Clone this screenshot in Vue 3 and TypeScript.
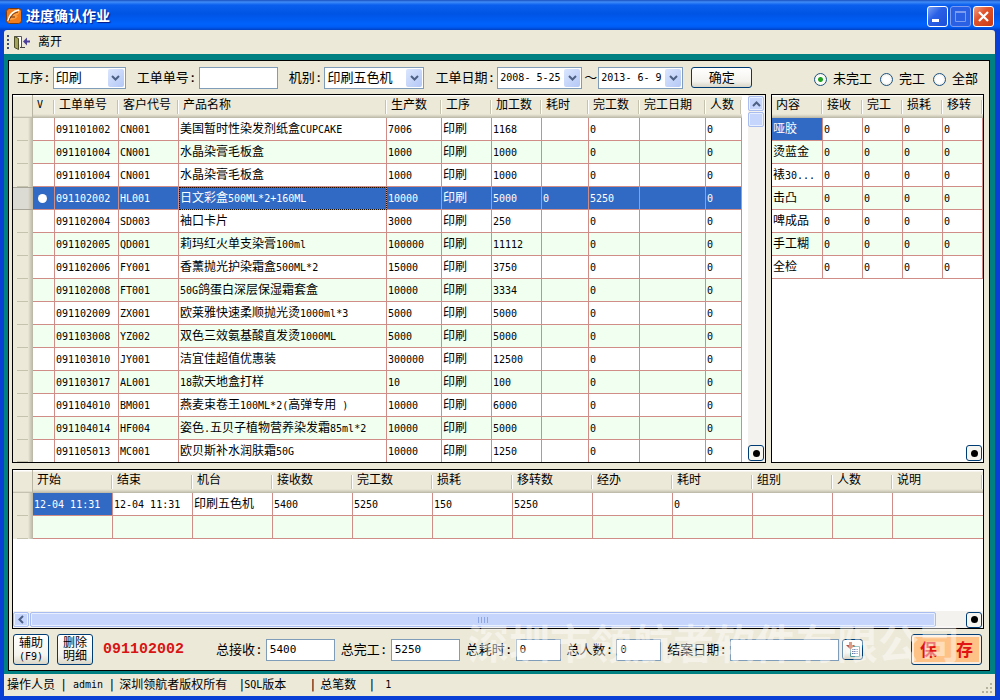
<script setup lang="ts">
import { ref } from 'vue'

interface Run {
  text: string
  latin: boolean
}

interface Column {
  label: string
  width?: number
}

function runs(text: string): Run[] {
  const parts = text.match(/[\x20-\x7e]+|[^\x20-\x7e]+/g) ?? []
  return parts.map((part) => ({ text: part, latin: /^[\x20-\x7e]/.test(part) }))
}

const orderColumns: Column[] = [
  { label: 'V', width: 22 },
  { label: '工单单号', width: 64 },
  { label: '客户代号', width: 60 },
  { label: '产品名称' },
  { label: '生产数', width: 55 },
  { label: '工序', width: 50 },
  { label: '加工数', width: 50 },
  { label: '耗时', width: 47 },
  { label: '完工数', width: 51 },
  { label: '完工日期', width: 66 },
  { label: '人数', width: 36 },
]

const orders: string[][] = [
  ['091101002', 'CN001', '美国暂时性染发剂纸盒CUPCAKE', '7006', '1168', '', '0'],
  ['091101004', 'CN001', '水晶染膏毛板盒', '1000', '1000', '', '0'],
  ['091101004', 'CN001', '水晶染膏毛板盒', '1000', '1000', '', '0'],
  ['091102002', 'HL001', '日文彩盒500ML*2+160ML', '10000', '5000', '0', '5250'],
  ['091102004', 'SD003', '袖口卡片', '3000', '250', '', '0'],
  ['091102005', 'QD001', '莉玛红火单支染膏100ml', '100000', '11112', '', '0'],
  ['091102006', 'FY001', '香薰抛光护染霜盒500ML*2', '15000', '3750', '', '0'],
  ['091102008', 'FT001', '50G鸽蛋白深层保湿霜套盒', '10000', '3334', '', '0'],
  ['091102009', 'ZX001', '欧莱雅快速柔顺抛光烫1000ml*3', '5000', '5000', '', '0'],
  ['091103008', 'YZ002', '双色三效氨基酸直发烫1000ML', '5000', '5000', '', '0'],
  ['091103010', 'JY001', '洁宜佳超值优惠装', '300000', '12500', '', '0'],
  ['091103017', 'AL001', '18款天地盒打样', '10', '100', '', '0'],
  ['091104010', 'BM001', '燕麦束卷王100ML*2(高弹专用 )', '10000', '6000', '', '0'],
  ['091104014', 'HF004', '姿色.五贝子植物营养染发霜85ml*2', '10000', '5000', '', '0'],
  ['091105013', 'MC001', '欧贝斯补水润肤霜50G', '10000', '1250', '', '0'],
].map(([no, customer, product, qty, processed, time, done]) => [
  '', no, customer, product, qty, '印刷', processed, time, done, '', '0',
])

const selectedOrder = ref(3)

const stepColumns: Column[] = [
  { label: '内容' },
  { label: '接收', width: 40 },
  { label: '完工', width: 40 },
  { label: '损耗', width: 40 },
  { label: '移转', width: 40 },
]
const steps = ['哑胶', '烫蓝金', '裱30...', '击凸', '啤成品', '手工糊', '全检'].map((name) => [
  name, '0', '0', '0', '0',
])

const recordColumns: Column[] = [
  { label: '开始', width: 80 },
  { label: '结束', width: 80 },
  { label: '机台', width: 80 },
  { label: '接收数', width: 80 },
  { label: '完工数', width: 80 },
  { label: '损耗', width: 80 },
  { label: '移转数', width: 80 },
  { label: '经办', width: 80 },
  { label: '耗时', width: 80 },
  { label: '组别', width: 80 },
  { label: '人数', width: 60 },
  { label: '说明' },
]
const records: string[][] = [
  ['12-04 11:31', '12-04 11:31', '印刷五色机', '5400', '5250', '150', '5250', '', '0', '', '', ''],
  ['', '', '', '', '', '', '', '', '', '', '', ''],
]

const process = ref('印刷')
const orderNo = ref('')
const machine = ref('印刷五色机')
const dateFrom = ref('2008- 5-25')
const dateTo = ref('2013- 6- 9')
const status = ref('未完工')
const totalReceived = ref('5400')
const totalDone = ref('5250')
const totalTime = ref('0')
const totalPeople = ref('0')
const closeDate = ref('')
</script>

<template>
  <div class="window">
    <header class="titlebar">
      <svg class="app-icon" width="16" height="16" viewBox="0 0 16 16">
        <rect x="0.5" y="0.5" width="15" height="15" rx="3" fill="#f07c1c" stroke="#7a3a10" />
        <path d="M2 13C2 6 6 2 14 2c0 3-2 5-4 6 1 0 2 0 2 0-2 3-5 4-8 4z" fill="#ffa040" />
        <path d="M2 13C3 7 7 3 13 2" fill="none" stroke="#fff" stroke-width="1.4" />
        <path d="M3 13C4 9 7 5 12 4M5 9h4" fill="none" stroke="#6a300c" />
      </svg>
      <h1>进度确认作业</h1>
      <div class="window-buttons">
        <button type="button" aria-label="最小化">
          <svg width="19" height="19" viewBox="0 0 19 19"><path d="M4 12h7v3H4z" fill="#fff" /></svg>
        </button>
        <button type="button" class="dim" aria-label="最大化" disabled>
          <svg width="19" height="19" viewBox="0 0 19 19">
            <path d="M4.500 5h10v9.500h-10z" fill="none" stroke="#7d9cf0" />
            <path d="M4 5h11" stroke="#7d9cf0" stroke-width="2" />
          </svg>
        </button>
        <button type="button" class="close" aria-label="关闭">
          <svg width="19" height="19" viewBox="0 0 19 19">
            <path d="M5 5l9 9M14 5l-9 9" stroke="#fff" stroke-width="2.200" />
          </svg>
        </button>
      </div>
    </header>

    <nav class="toolbar">
      <span class="grip"><i></i><i></i><i></i><i></i></span>
      <button type="button" class="leave">
        <svg width="17" height="15" viewBox="0 0 17 15">
          <path d="M1.500 1.500h7v11" fill="#fff" stroke="#555" />
          <path d="M1.500 1.500l4 2v11l-4-2z" fill="#a3a45c" stroke="#4d4d28" />
          <path d="M7 12.500h5" stroke="#444" />
          <path d="M10 6.500l4-4v3h3v2h-3v3z" fill="#4a3f9a" />
        </svg>
        <span>离开</span>
      </button>
    </nav>

    <div class="desk">
      <main class="panel">
        <form class="filters" @submit.prevent>
          <div class="field">
            <label for="process">工序:</label>
            <span class="combo short">
              <select id="process" v-model="process"><option>印刷</option></select>
              <span class="drop"><svg width="9" height="6" viewBox="0 0 9 6"><path d="M1 1l3.500 3.500L8 1" fill="none" stroke="#4d6185" stroke-width="2" /></svg></span>
            </span>
          </div>
          <div class="field">
            <label for="order-no">工单单号:</label>
            <input id="order-no" v-model="orderNo" class="order-no" type="text" />
          </div>
          <div class="field">
            <label for="machine">机别:</label>
            <span class="combo long">
              <select id="machine" v-model="machine"><option>印刷五色机</option></select>
              <span class="drop"><svg width="9" height="6" viewBox="0 0 9 6"><path d="M1 1l3.500 3.500L8 1" fill="none" stroke="#4d6185" stroke-width="2" /></svg></span>
            </span>
          </div>
          <div class="field">
            <label for="date-from">工单日期:</label>
            <span class="combo date">
              <input id="date-from" v-model="dateFrom" type="text" />
              <span class="drop"><svg width="9" height="6" viewBox="0 0 9 6"><path d="M1 1l3.500 3.500L8 1" fill="none" stroke="#4d6185" stroke-width="2" /></svg></span>
            </span>
            <label for="date-to" class="tilde">～</label>
            <span class="combo date">
              <input id="date-to" v-model="dateTo" type="text" />
              <span class="drop"><svg width="9" height="6" viewBox="0 0 9 6"><path d="M1 1l3.500 3.500L8 1" fill="none" stroke="#4d6185" stroke-width="2" /></svg></span>
            </span>
          </div>
          <button type="submit" class="xp-button confirm">确定</button>
          <div class="radios">
            <label v-for="name in ['未完工', '完工', '全部']" :key="name">
              <input v-model="status" type="radio" name="status" :value="name" />{{ name }}
            </label>
          </div>
        </form>

        <div class="upper">
          <section class="pane orders">
            <div class="table-wrap">
              <table>
                <colgroup>
                  <col class="stub-col" />
                  <col v-for="c in orderColumns" :key="c.label" :style="{ width: c.width ? c.width + 'px' : 'auto' }" />
                </colgroup>
                <thead>
                  <tr>
                    <th class="stub"></th>
                    <th v-for="c in orderColumns" :key="c.label" :class="{ latin: c.label === 'V' }">{{ c.label }}</th>
                  </tr>
                </thead>
                <tbody>
                  <tr
                    v-for="(row, r) in orders"
                    :key="r"
                    :class="{ selected: r === selectedOrder }"
                    @click="selectedOrder = r"
                  >
                    <td class="stub"></td>
                    <td v-for="(cell, c) in row" :key="c" :class="{ focus: r === selectedOrder && c === 3 }">
                      <i v-if="c === 0 && r === selectedOrder" class="dot"></i>
                      <span v-for="(run, i) in runs(cell)" v-else :key="i" :class="{ latin: run.latin }">{{ run.text }}</span>
                    </td>
                  </tr>
                </tbody>
              </table>
            </div>
            <div class="vscroll">
              <button type="button" class="scroll-button" aria-label="向上">
                <svg width="9" height="6" viewBox="0 0 9 6"><path d="M1 5l3.500-3.500L8 5" fill="none" stroke="#4d6185" stroke-width="2" /></svg>
              </button>
              <div class="thumb"></div>
              <button type="button" class="mark" aria-label="记录"><i></i></button>
            </div>
          </section>

          <section class="pane steps">
            <table>
              <colgroup>
                <col v-for="c in stepColumns" :key="c.label" :style="{ width: c.width ? c.width + 'px' : 'auto' }" />
              </colgroup>
              <thead>
                <tr><th v-for="c in stepColumns" :key="c.label">{{ c.label }}</th></tr>
              </thead>
              <tbody>
                <tr v-for="(row, r) in steps" :key="r">
                  <td v-for="(cell, c) in row" :key="c" :class="{ current: r === 0 && c === 0 }">
                    <span v-for="(run, i) in runs(cell)" :key="i" :class="{ latin: run.latin }">{{ run.text }}</span>
                  </td>
                </tr>
              </tbody>
            </table>
            <button type="button" class="mark" aria-label="记录"><i></i></button>
          </section>
        </div>

        <section class="pane records">
          <table>
            <colgroup>
              <col class="stub-col" />
              <col v-for="c in recordColumns" :key="c.label" :style="{ width: c.width ? c.width + 'px' : 'auto' }" />
            </colgroup>
            <thead>
              <tr>
                <th class="stub"></th>
                <th v-for="c in recordColumns" :key="c.label">{{ c.label }}</th>
              </tr>
            </thead>
            <tbody>
              <tr v-for="(row, r) in records" :key="r">
                <td class="stub"></td>
                <td v-for="(cell, c) in row" :key="c" :class="{ current: r === 0 && c === 0 }">
                  <span v-for="(run, i) in runs(cell)" :key="i" :class="{ latin: run.latin }">{{ run.text }}</span>
                </td>
              </tr>
            </tbody>
          </table>
          <div class="hscroll">
            <button type="button" class="scroll-button" aria-label="向左">
              <svg width="6" height="9" viewBox="0 0 6 9"><path d="M5 1L1.500 4.500L5 8" fill="none" stroke="#4d6185" stroke-width="2" /></svg>
            </button>
            <div class="thumb"><i></i><i></i><i></i><i></i></div>
            <button type="button" class="mark" aria-label="记录"><i></i></button>
          </div>
        </section>

        <footer class="totals">
          <button type="button" class="xp-button tall">辅助<br /><span class="latin">(F9)</span></button>
          <button type="button" class="xp-button tall">删除<br />明细</button>
          <strong>091102002</strong>
          <div class="fields">
            <div class="field">
              <label for="received">总接收:</label>
              <input id="received" v-model="totalReceived" class="wide" type="text" />
            </div>
            <div class="field">
              <label for="done">总完工:</label>
              <input id="done" v-model="totalDone" class="wide" type="text" />
            </div>
            <div class="field">
              <label for="time">总耗时:</label>
              <input id="time" v-model="totalTime" class="narrow" type="text" />
            </div>
            <div class="field">
              <label for="people">总人数:</label>
              <input id="people" v-model="totalPeople" class="narrow" type="text" />
            </div>
            <div class="field">
              <label for="close-date">结案日期:</label>
              <input id="close-date" v-model="closeDate" class="close-date" type="text" />
              <button type="button" class="xp-button calendar" aria-label="选择日期">
                <svg width="16" height="16" viewBox="0 0 16 16">
                  <path d="M5.500 4.500h9v10h-9z" fill="#fff" stroke="#5b9a9a" />
                  <path d="M7 7.500h6M7 9.500h6M7 11.500h6" stroke="#5c6c9c" stroke-dasharray="1.500 .7" />
                  <path d="M4 0h3v3h3L5.500 7.500 1 3h3z" fill="#b8522c" />
                </svg>
              </button>
            </div>
          </div>
          <button type="button" class="xp-button save"><span>保</span><span>存</span></button>
          <div class="watermark">深圳市领航者软件有限公司</div>
        </footer>
      </main>
    </div>

    <footer class="statusbar">
      <span>操作人员</span><b>|</b>
      <span class="user">admin</span><b>|</b>
      <span class="owner">深圳领航者版权所有</span>
      <span class="edition"><b>|</b><span class="latin">SQL</span>版本</span><b>|</b>
      <span class="count">总笔数</span><b>|</b>
      <span class="number">1</span>
      <svg class="size-grip" width="12" height="12" viewBox="0 0 12 12">
        <path d="M9 1h2v2H9zM5 5h2v2H5zM9 5h2v2H9zM1 9h2v2H1zM5 9h2v2H5zM9 9h2v2H9z" fill="#b3b09c" />
      </svg>
    </footer>
  </div>
</template>

<style>
body {
  background: #ece9d8;
}
</style>

<style scoped>
.window,
.window * {
  box-sizing: border-box;
}
.window {
  display: flex;
  flex-direction: column;
  min-height: 100vh;
  padding: 0 5px 4px 4px;
  background: #0a3fd6;
  color: #000;
  font: 12px/16px 'DejaVu Sans Mono', 'Noto Sans CJK SC', monospace;
}
button,
input,
select {
  font: inherit;
  color: inherit;
  margin: 0;
  border-radius: 0;
}
.latin {
  font-size: 10px;
}

.titlebar {
  display: flex;
  align-items: center;
  gap: 4px;
  height: 30px;
  margin: 0 -5px 0 -4px;
  padding: 2px 6px 0;
  background: linear-gradient(#1b50c0, #3f8cf8 2px, #0a5fee 5px, #0054e4 14px, #0062fc 24px, #005cf4 27px, #0040c4);
}
h1 {
  flex: 1;
  margin: 0;
  color: #fff;
  font-size: 14px;
  line-height: 20px;
  text-shadow: 1px 1px 1px #0a1883;
}
.window-buttons {
  display: flex;
  gap: 2px;
}
.window-buttons button {
  display: flex;
  width: 21px;
  height: 21px;
  padding: 0;
  border: 1px solid #fff;
  border-radius: 3px;
  background: linear-gradient(135deg, #7ba2f5, #2b61e6 40%, #1d4fd8);
}
.window-buttons .dim {
  border-color: #7d9cf0;
  background: #2a60e4;
}
.window-buttons .close {
  background: linear-gradient(135deg, #f0a085, #e0542c 40%, #c83a12);
}

.toolbar {
  display: flex;
  align-items: center;
  gap: 4px;
  height: 24px;
  padding: 0 3px;
  border-radius: 3px 3px 0 0;
  background: #ece9d8;
}
.grip {
  display: grid;
  gap: 2px;
}
.grip i {
  width: 2px;
  height: 2px;
  background: #3f4a7a;
}
.leave {
  display: flex;
  align-items: center;
  gap: 8px;
  padding: 0;
  border: 0;
  background: none;
}

.desk {
  display: flex;
  flex: 1;
  padding: 6px 5px 3px 4px;
  background: #008080;
}
.panel {
  display: flex;
  flex: 1;
  flex-direction: column;
  min-width: 0;
  padding: 0 5px 0 3px;
  border: 1px solid #000;
  background: #ece9d8;
}

.filters {
  display: flex;
  align-items: center;
  gap: 11px;
  height: 33px;
  padding: 0 6px 0 5px;
}
.field {
  display: flex;
  align-items: center;
  gap: 2px;
  font-size: 13px;
  white-space: nowrap;
}
.field input,
.combo {
  height: 22px;
  border: 1px solid #7f9db9;
  background: #fff;
}
.field input {
  padding: 0 3px;
  font-size: 11px;
}
.combo {
  display: flex;
  padding: 1px;
  position: relative;
}
.combo select,
.combo input {
  flex: 1;
  width: 100%;
  min-width: 0;
  height: 100%;
  padding: 0 1px;
  border: 0;
  appearance: none;
  background: none;
  line-height: 16px;
}
.field .combo input {
  height: 100%;
  padding: 0 1px;
  border: 0;
  font-size: 10px;
}
.drop {
  position: absolute;
  top: 1px;
  right: 1px;
  bottom: 1px;
  display: flex;
  align-items: center;
  justify-content: center;
  width: 16px;
  border-radius: 2px;
  background: linear-gradient(135deg, #dbe6fe, #b4c8f6);
  pointer-events: none;
}
.short {
  width: 73px;
}
.long {
  width: 100px;
}
.date {
  width: 85px;
}
.order-no {
  width: 79px;
}
.tilde {
  width: 12px;
}
.xp-button {
  padding: 0;
  border: 1px solid #003c74;
  border-radius: 3px;
  background: linear-gradient(#fff, #f4f3ee 70%, #d9d5c8);
}
.confirm {
  width: 61px;
  height: 21px;
  margin-left: -3px;
  font-size: 13px;
}
.radios {
  display: flex;
  gap: 8px;
  margin-left: auto;
  padding-top: 3px;
  font-size: 13px;
  white-space: nowrap;
}
.radios label {
  display: flex;
  align-items: center;
  gap: 6px;
}
.radios input {
  appearance: none;
  width: 13px;
  height: 13px;
  border: 1px solid #1d5281;
  border-radius: 50%;
  background: radial-gradient(circle, #fff 40%, #dedcd0);
}
.radios input:checked {
  background: radial-gradient(circle, #21a121 2px, #fff 3px, #eceadf);
}

.upper {
  display: flex;
  gap: 5px;
}
.pane {
  position: relative;
  min-width: 0;
  border: 1px solid #000;
  background: #fff;
}
.orders {
  display: flex;
  flex: 1;
  gap: 6px;
}
.table-wrap {
  flex: 1;
  min-width: 0;
}
.steps {
  width: 213px;
}
.records {
  display: flex;
  flex: 1;
  flex-direction: column;
  margin-top: 6px;
}

table {
  width: 100%;
  table-layout: fixed;
  border-collapse: separate;
  border-spacing: 0;
}
.stub-col {
  width: 20px;
}
th {
  height: 23px;
  padding: 0 0 3px 4px;
  overflow: hidden;
  background:
    linear-gradient(#c5c2ae, #c5c2ae) right 1px top 5px / 1px 14px no-repeat,
    linear-gradient(#fff, #fff) right 0 top 5px / 1px 14px no-repeat,
    linear-gradient(#fff 1px, #ece9d8 2px, #ece9d8 19px, #d6d2c2 21px, #b8b5a4 23px);
  font-weight: normal;
  text-align: left;
  white-space: nowrap;
}
td {
  height: 23px;
  padding: 0 0 0 1px;
  overflow: hidden;
  border-right: 1px solid #d08c86;
  border-bottom: 1px solid #d08c86;
  white-space: nowrap;
}
.records td:last-child,
.records th:last-child {
  border-right: 0;
}
.orders tbody tr:last-child td {
  height: 22px;
  border-bottom: 0;
}
tbody tr:nth-child(even) {
  background: #f0fff0;
}
tbody tr.selected,
td.current {
  background: #316ac5;
  color: #fff;
}
th.stub {
  background:
    linear-gradient(#b8b5a4, #b8b5a4) right top / 1px 100% no-repeat,
    linear-gradient(#fff 1px, #ece9d8 2px, #ece9d8 21px, #b8b5a4 23px);
}
td.stub {
  border: 0;
  background:
    linear-gradient(#c5c2ae, #c5c2ae) left 4px bottom / 11px 1px no-repeat,
    linear-gradient(90deg, #ece9d8 15px, #d6d2c2 17px, #b8b5a4 20px);
}
.selected td.stub {
  border-top: 1px solid #a8a698;
  border-bottom: 1px solid #a8a698;
  background: linear-gradient(90deg, #dcdbd3 15px, #ccc9bc 17px, #b8b5a4 20px);
}
.dot {
  display: block;
  width: 9px;
  height: 9px;
  margin-left: 4px;
  border-radius: 50%;
  background: #fff;
}
.focus {
  outline: 1px dotted #201000;
  outline-offset: -1px;
}

.vscroll {
  display: flex;
  flex-direction: column;
  gap: 1px;
  width: 17px;
  padding: 1px 1px 1px 0;
  background: #f4f2ee;
}
.scroll-button,
.thumb {
  display: flex;
  align-items: center;
  justify-content: center;
  width: 16px;
  height: 15px;
  padding: 0;
  border: 1px solid #a9bdf0;
  border-radius: 2px;
  background: #c6d5fc;
  box-shadow: inset 0 0 0 1px #e8effe;
}
.mark {
  display: flex;
  align-items: center;
  justify-content: center;
  width: 16px;
  height: 16px;
  margin-top: auto;
  padding: 0;
  border: 1px solid #003c74;
  border-radius: 3px;
  background: #f6f5f0;
}
.mark i {
  width: 7px;
  height: 7px;
  border-radius: 50%;
  background: #000;
}
.steps .mark {
  position: absolute;
  right: 1px;
  bottom: 1px;
}
.hscroll {
  display: flex;
  align-items: center;
  gap: 1px;
  height: 17px;
  margin-top: auto;
  padding-right: 1px;
  background: #f4f2ee;
}
.hscroll .thumb {
  flex: 1;
  gap: 1px;
  margin-right: 29px;
}
.hscroll .thumb i {
  width: 1px;
  height: 6px;
  margin-right: 1px;
  background: #8ca6e8;
}
.hscroll .mark {
  margin-top: 0;
}

.totals {
  position: relative;
  display: flex;
  align-items: center;
  height: 41px;
  padding: 0 2px 0 1px;
}
.tall {
  width: 36px;
  height: 31px;
  margin-right: 8px;
  line-height: 13px;
}
.totals strong {
  margin-left: 2px;
  color: #d81414;
  font: bold 15px/20px 'Liberation Mono', monospace;
}
.fields {
  display: flex;
  gap: 6px;
  margin-left: 32px;
}
.fields .field {
  gap: 3px;
}
.wide {
  width: 69px;
}
.narrow {
  width: 45px;
}
.close-date {
  width: 109px;
}
.calendar {
  display: flex;
  align-items: center;
  justify-content: center;
  width: 21px;
  height: 21px;
}
.save {
  display: flex;
  align-items: center;
  justify-content: space-between;
  width: 71px;
  height: 31px;
  margin-left: auto;
  padding: 0 8px;
  background: #ffc286;
  box-shadow: inset 0 0 0 2px #f8ece0;
  color: #e01414;
  font-size: 17px;
  font-weight: bold;
}
.watermark {
  position: absolute;
  right: 24px;
  top: -6px;
  color: rgba(255, 255, 255, 0.45);
  font-size: 41px;
  font-weight: bold;
  line-height: 44px;
  white-space: nowrap;
  pointer-events: none;
}

.statusbar {
  display: flex;
  align-items: center;
  gap: 5px;
  height: 22px;
  padding: 0 2px 0 3px;
  background: #ece9d8;
  white-space: nowrap;
}
.statusbar b {
  width: 6px;
  font-weight: normal;
  text-align: center;
}
.user,
.number {
  padding-left: 2px;
  font-size: 10px;
}
.owner {
  width: 114px;
}
.edition {
  display: flex;
  width: 66px;
}
.count {
  width: 43px;
}
.number {
  padding-left: 6px;
}
.size-grip {
  margin: auto 0 2px auto;
}
</style>
